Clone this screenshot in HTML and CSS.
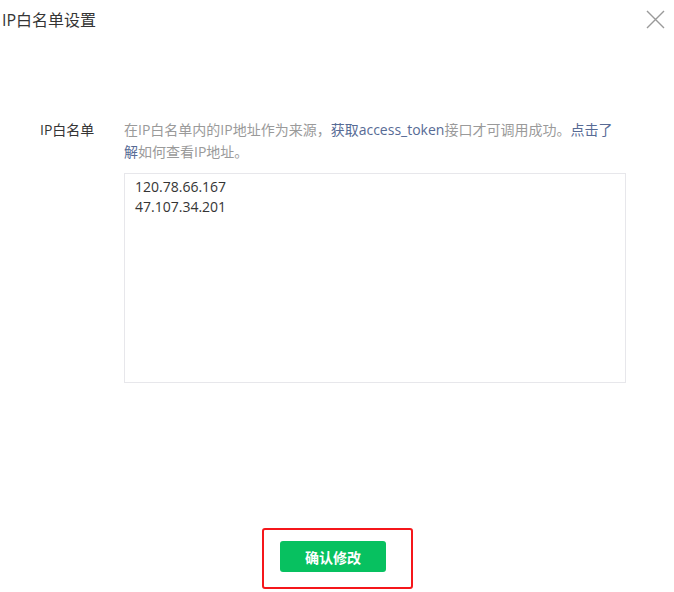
FILE: index.html
```html
<!DOCTYPE html>
<html lang="zh-CN">
<head>
<meta charset="utf-8">
<title>IP白名单设置</title>
<link rel="stylesheet" href="styles.css">
</head>
<body>
<div class="dialog">
  <div class="header">
    <div class="title">IP白名单设置</div>
    <div class="close" aria-label="关闭">
      <svg width="19" height="19" viewBox="0 0 19 19"><path d="M1 1L18 18M18 1L1 18" stroke="#9a9a9a" stroke-width="1.4" fill="none"/></svg>
    </div>
  </div>
  <div class="form-row">
    <div class="label">IP白名单</div>
    <div class="field">
      <div class="desc">在IP白名单内的IP地址作为来源，<span class="link">获取access_token</span>接口才可调用成功。<span class="link">点击了解</span>如何查看IP地址。</div>
      <div class="ip-box">120.78.66.167<br>47.107.34.201</div>
    </div>
  </div>
  <div class="footer">
    <div class="btn-wrap">
      <button class="btn-primary">确认修改</button>
    </div>
  </div>
</div>
</body>
</html>
```
FILE: styles.css
```css
html, body {
  margin: 0;
  padding: 0;
  background: #fff;
}
body {
  font-family: "Open Sans", "Noto Sans CJK SC", sans-serif;
  color: #353535;
  width: 674px;
  height: 592px;
  overflow: hidden;
}
.dialog {
  display: flex;
  flex-direction: column;
}
.header {
  display: flex;
  justify-content: space-between;
  align-items: center;
  height: 40px;
  padding: 0 9px 0 2px;
}
.title {
  font-size: 16px;
  line-height: 40px;
  color: #353535;
}
.close {
  display: flex;
  width: 19px;
  height: 19px;
  margin-top: -2px;
}
.form-row {
  display: flex;
  margin-top: 79px;
}
.label {
  flex: 0 0 124px;
  padding-left: 40px;
  box-sizing: border-box;
  font-size: 14px;
  line-height: 22px;
  color: #353535;
  white-space: nowrap;
}
.field {
  flex: 0 0 502px;
}
.desc {
  font-size: 14px;
  line-height: 22px;
  color: #9a9a9a;
}
.link {
  color: #576b95;
}
.ip-box {
  margin-top: 10px;
  height: 210px;
  box-sizing: border-box;
  border: 1px solid #e7e7eb;
  padding: 3px 10px;
  font-size: 14px;
  line-height: 20px;
  color: #353535;
}
.footer {
  display: flex;
  justify-content: center;
  padding-right: 8px;
  margin-top: 158px;
}
.btn-wrap {
  position: relative;
  display: flex;
}
.btn-wrap::before {
  content: "";
  position: absolute;
  left: -18px;
  right: -27px;
  top: -13px;
  bottom: -17px;
  border: 2.5px solid #f5171b;
  border-radius: 3px;
}
.btn-primary {
  width: 106px;
  height: 31px;
  border: 0;
  border-radius: 3px;
  background: #07c160;
  color: #fff;
  font-family: "Noto Sans CJK SC", sans-serif;
  font-size: 14px;
  font-weight: 700;
  padding: 0;
}
```
